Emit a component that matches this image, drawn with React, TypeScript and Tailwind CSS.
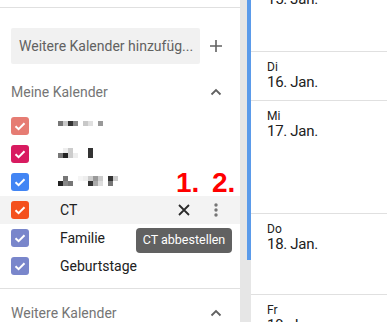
import React from "react";

type Cell = [number, number, string];

const names: Cell[][] = [
  [
    [0, 0, "#777"], [5, 0, "#c8c8c8"], [10, 0, "#333"], [15, 0, "#888"],
    [25, 0, "#c8c8c8"], [30, 0, "#e0e0e0"], [40, 0, "#999"],
  ],
  [
    [0, 5, "#777"], [5, 0, "#eee"], [5, 5, "#222"], [10, 0, "#ccc"], [10, 5, "#ccc"],
    [15, 5, "#eee"], [30, 0, "#333"], [30, 5, "#333"],
  ],
  [
    [0, 5, "#222"], [5, 0, "#777"], [5, 5, "#888"], [10, 5, "#777"], [20, 0, "#f5f5f5"],
    [25, 0, "#eee"], [30, 0, "#ccc"], [30, 5, "#333"], [35, 0, "#999"], [35, 5, "#aaa"],
    [40, 0, "#ccc"], [40, 5, "#ddd"], [50, 0, "#333"], [50, 5, "#777"], [55, 0, "#ccc"],
  ],
];

function Pixels({ cells, top }: { cells: Cell[]; top: number }) {
  return (
    <svg width="62" height="12" viewBox="0 0 62 12" className="shrink-0" style={{ marginTop: top }}>
      {cells.map(([x, y, c], i) => (
        <rect key={i} x={x} y={y} width="5" height="5" fill={c} />
      ))}
    </svg>
  );
}

function Check({ color }: { color: string }) {
  return (
    <div className="w-[18px] h-[18px] rounded-[3px] flex items-center justify-center shrink-0" style={{ background: color }}>
      <svg width="18" height="18" viewBox="0 0 18 18">
        <path d="M4.5 9.2 L7.6 12.2 L13.5 6.3" fill="none" stroke="#fff" strokeWidth="2" />
      </svg>
    </div>
  );
}

function Chevron() {
  return (
    <div className="w-[32px] flex items-center justify-center">
      <svg width="12" height="8" viewBox="0 0 12 8">
        <path d="M1.5 6.5 L6 2 L10.5 6.5" fill="none" stroke="#616161" strokeWidth="1.8" />
      </svg>
    </div>
  );
}

export default function App() {
  const rowsTop = [
    { color: "#e67c73", pix: 0 },
    { color: "#d81b60", pix: 1 },
    { color: "#4285f4", pix: 2 },
  ];
  return (
    <div className="relative w-[387px] h-[322px] overflow-hidden bg-white flex" style={{ fontFamily: "Roboto, 'Liberation Sans', sans-serif" }}>
      {/* Left panel */}
      <div className="w-[240px] shrink-0 flex flex-col">
        <div className="h-[8px] border-b border-[#e0e0e0] shrink-0" />
        <div className="mt-[20px] flex items-center shrink-0">
          <div className="ml-[11px] w-[189px] h-[36px] bg-[#f1f1f1] rounded-[2px] pl-[8px] flex items-center text-[14px] text-[#616161] whitespace-nowrap overflow-hidden">
            Weitere Kalender hinzufüg...
          </div>
          <div className="w-[32px] flex items-center justify-center">
            <svg width="14" height="14" viewBox="0 0 14 14">
              <path d="M7 1 V13 M1 7 H13" stroke="#616161" strokeWidth="1.6" />
            </svg>
          </div>
        </div>
        <div className="mt-[8px] h-[40px] flex items-center justify-between pl-[11px] pr-[8px] shrink-0">
          <span className="text-[14px] text-[#757575]">Meine Kalender</span>
          <Chevron />
        </div>
        {rowsTop.map((r, i) => (
          <div key={i} className="h-[28px] flex items-center pl-[11px] shrink-0">
            <Check color={r.color} />
            <div className="ml-[29px] h-[12px] flex items-start">
              <Pixels cells={names[r.pix]} top={i === 0 ? 1 : 0} />
            </div>
          </div>
        ))}
        <div className="h-[28px] flex items-center pl-[11px] pr-[8px] bg-[#f3f3f3] shrink-0">
          <Check color="#f4511e" />
          <span className="ml-[31px] text-[14px] text-[#212121]">CT</span>
          <div className="ml-auto w-[32px] flex items-center justify-center">
            <svg width="12" height="12" viewBox="0 0 12 12">
              <path d="M1 1 L11 11 M11 1 L1 11" stroke="#2b2b2b" strokeWidth="1.8" />
            </svg>
          </div>
          <div className="w-[32px] flex items-center justify-center">
            <svg width="4" height="14" viewBox="0 0 4 14">
              <circle cx="2" cy="2" r="1.7" fill="#757575" />
              <circle cx="2" cy="7" r="1.7" fill="#757575" />
              <circle cx="2" cy="12" r="1.7" fill="#757575" />
            </svg>
          </div>
        </div>
        <div className="h-[28px] flex items-center pl-[11px] shrink-0">
          <Check color="#7986cb" />
          <span className="ml-[31px] text-[14px] text-[#212121]">Familie</span>
        </div>
        <div className="h-[28px] flex items-center pl-[11px] shrink-0">
          <Check color="#7986cb" />
          <span className="ml-[31px] text-[14px] text-[#212121]">Geburtstage</span>
        </div>
        <div className="mt-[8px] border-t border-[#e0e0e0] shrink-0" />
        <div className="mt-[4px] h-[40px] flex items-center justify-between pl-[11px] pr-[8px] shrink-0">
          <span className="text-[14px] text-[#757575]">Weitere Kalender</span>
          <Chevron />
        </div>
      </div>

      {/* Scrollbar */}
      <div className="w-[11px] shrink-0 bg-[#e6e6e6] h-[322px]">
        <div className="ml-[7px] w-[4px] h-[260px] bg-[#5b9bea]" />
      </div>

      {/* Right panel */}
      <div className="flex-1 flex flex-col text-[#212121]">
        <div className="mt-[-31px] h-[83px] border-b border-[#e0e0e0] pl-[16px] pt-[8px] shrink-0">
          <div className="text-[12px] leading-[14px]">Mo</div>
          <div className="text-[15px] leading-[17px] tracking-[-0.3px]">15. Jan.</div>
        </div>
        <div className="h-[49px] border-b border-[#e0e0e0] pl-[16px] pt-[8px] shrink-0">
          <div className="text-[12px] leading-[14px]">Di</div>
          <div className="text-[15px] leading-[17px] tracking-[-0.3px]">16. Jan.</div>
        </div>
        <div className="h-[113px] border-b border-[#e0e0e0] pl-[16px] pt-[8px] shrink-0">
          <div className="text-[12px] leading-[14px]">Mi</div>
          <div className="text-[15px] leading-[17px] tracking-[-0.3px]">17. Jan.</div>
        </div>
        <div className="h-[81px] border-b border-[#e0e0e0] pl-[16px] pt-[8px] shrink-0">
          <div className="text-[12px] leading-[14px]">Do</div>
          <div className="text-[15px] leading-[17px] tracking-[-0.3px]">18. Jan.</div>
        </div>
        <div className="pl-[16px] pt-[8px] shrink-0">
          <div className="text-[12px] leading-[14px]">Fr</div>
          <div className="text-[15px] leading-[17px] tracking-[-0.3px]">19. Jan.</div>
        </div>
      </div>

      {/* Tooltip */}
      <div className="absolute left-[136px] top-[228px] w-[96px] h-[25px] rounded-[4px] bg-[#616161] text-white text-[12.5px] flex items-center justify-center whitespace-nowrap">
        CT abbestellen
      </div>

      {/* Annotations */}
      <div className="absolute left-[176px] top-[168px] text-[28px] leading-[30px] font-bold text-[#ff0000]" style={{ fontFamily: "'Liberation Sans', Arial, sans-serif" }}>
        1.
      </div>
      <div className="absolute left-[212px] top-[168px] text-[28px] leading-[30px] font-bold text-[#ff0000]" style={{ fontFamily: "'Liberation Sans', Arial, sans-serif" }}>
        2.
      </div>
    </div>
  );
}
